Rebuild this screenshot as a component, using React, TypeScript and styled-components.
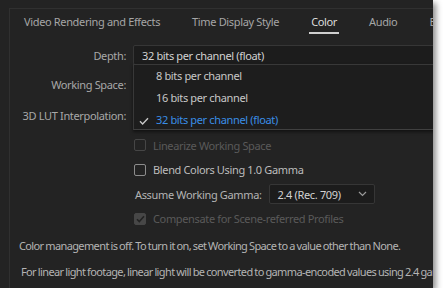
import React from 'react';
import styled, { createGlobalStyle } from 'styled-components';

const GlobalStyle = createGlobalStyle`
  html, body { margin: 0; padding: 0; background: #fff; }
  body { font-family: "Noto Sans", "Open Sans", sans-serif; }
`;

const Window = styled.div`
  width: 433px;
  height: 288px;
  background: #232323;
  box-shadow: 3px 3px 6px rgba(0, 0, 0, 0.45);
  overflow: hidden;
  padding: 8px 0 0 9px;
  box-sizing: border-box;
  font-size: 11px;
  letter-spacing: -0.35px;
  color: #b0b0b0;
`;

const Frame = styled.div`
  position: relative;
  width: 520px;
  height: 400px;
  border-top: 1px solid #303030;
  border-left: 1px solid #303030;
`;

const TabBar = styled.div`
  display: flex;
  gap: 32px;
  padding-left: 14px;
  height: 31px;
  white-space: nowrap;
`;

const Tab = styled.div<{ active?: boolean }>`
  position: relative;
  padding-top: 6px;
  line-height: 14px;
  color: ${({ active }) => (active ? '#dcdcdc' : '#a6a6a6')};
  &::after {
    content: '';
    display: ${({ active }) => (active ? 'block' : 'none')};
    position: absolute;
    left: -2px;
    right: -2px;
    top: 23px;
    height: 2px;
    background: #cfcfcf;
  }
`;

const Form = styled.div`
  display: flex;
  flex-direction: column;
`;

const Row = styled.div<{ h: number; top?: number }>`
  display: flex;
  align-items: center;
  gap: 7px;
  height: ${({ h }) => h}px;
  margin-top: ${({ top }) => top ?? 0}px;
`;

const Label = styled.div`
  width: 116px;
  text-align: right;
  color: #a8a8a8;
  white-space: nowrap;
`;

const Select = styled.div<{ w?: number }>`
  display: flex;
  align-items: center;
  justify-content: space-between;
  box-sizing: border-box;
  height: 20px;
  width: ${({ w }) => (w ? `${w}px` : '320px')};
  padding: 0 7px 0 8px;
  background: #1c1c1c;
  border: 1px solid #363636;
  border-radius: 2px;
  color: #d2d2d2;
  white-space: nowrap;
`;

const Menu = styled.div`
  position: absolute;
  left: 123px;
  top: 55px;
  width: 320px;
  height: 66px;
  box-sizing: border-box;
  background: #1d1d1d;
  border: 1px solid #383838;
  border-bottom-color: #404040;
  box-shadow: 0 2px 3px rgba(0, 0, 0, 0.5);
`;

const MenuItem = styled.div<{ selected?: boolean }>`
  position: relative;
  height: 22px;
  line-height: 22px;
  padding-left: 22px;
  color: ${({ selected }) => (selected ? '#3a8ee6' : '#c8c8c8')};
  white-space: nowrap;
`;

const Check = styled.svg`
  position: absolute;
  left: 5px;
  top: 8px;
`;

const CheckRow = styled.div<{ h: number; disabled?: boolean; top?: number }>`
  display: flex;
  align-items: center;
  gap: 7px;
  height: ${({ h }) => h}px;
  margin-top: ${({ top }) => top ?? 0}px;
  padding-left: 124px;
  color: ${({ disabled }) => (disabled ? '#5a5a5a' : '#bdbdbd')};
  white-space: nowrap;
`;

const Box = styled.div<{ disabled?: boolean; checked?: boolean }>`
  width: 12px;
  height: 12px;
  box-sizing: border-box;
  border-radius: 2px;
  border: 1.5px solid ${({ disabled }) => (disabled ? '#464646' : '#8c8c8c')};
  background: ${({ checked, disabled }) => (checked ? (disabled ? '#474747' : '#8c8c8c') : 'transparent')};
  display: flex;
  align-items: center;
  justify-content: center;
`;

const GammaRow = styled.div`
  display: flex;
  align-items: center;
  gap: 7px;
  height: 24px;
  padding-left: 125px;
  color: #b4b4b4;
  white-space: nowrap;
`;

const Note = styled.div<{ indent: number; top: number }>`
  padding-left: ${({ indent }) => indent}px;
  margin-top: ${({ top }) => top}px;
  line-height: 14px;
  letter-spacing: -0.62px;
  word-spacing: -0.5px;
  color: #b4b4b4;
  white-space: nowrap;
`;

const Chevron = () => (
  <svg width="9" height="6" viewBox="0 0 9 6">
    <path d="M1 1l3.5 3.5L8 1" fill="none" stroke="#9a9a9a" strokeWidth="1.2" />
  </svg>
);

const App: React.FC = () => {
  return (
    <>
      <GlobalStyle />
      <Window>
        <Frame>
          <TabBar>
            <Tab>Video Rendering and Effects</Tab>
            <Tab>Time Display Style</Tab>
            <Tab active>Color</Tab>
            <Tab>Audio</Tab>
            <Tab>Export</Tab>
          </TabBar>
          <Form>
            <Row h={20} top={5}>
              <Label>Depth:</Label>
              <Select>32 bits per channel (float)</Select>
            </Row>
            <Row h={20} top={9}>
              <Label>Working Space:</Label>
              <Select />
            </Row>
            <Row h={20} top={11}>
              <Label>3D LUT Interpolation:</Label>
              <Select />
            </Row>
            <CheckRow h={24} disabled top={8}>
              <Box disabled />
              Linearize Working Space
            </CheckRow>
            <CheckRow h={25}>
              <Box />
              Blend Colors Using 1.0 Gamma
            </CheckRow>
            <GammaRow>
              Assume Working Gamma:
              <Select w={106}>
                2.4 (Rec. 709)
                <Chevron />
              </Select>
            </GammaRow>
            <CheckRow h={25} disabled>
              <Box disabled checked>
                <svg width="9" height="8" viewBox="0 0 9 8">
                  <path d="M1 4.2l2.3 2.3L8 1.2" fill="none" stroke="#232323" strokeWidth="1.6" />
                </svg>
              </Box>
              Compensate for Scene-referred Profiles
            </CheckRow>
            <Note indent={9} top={8}>
              Color management is off. To turn it on, set Working Space to a value other than None.
            </Note>
            <Note indent={11} top={12}>
              For linear light footage, linear light will be converted to gamma-encoded values using 2.4 gamma.
            </Note>
          </Form>
          <Menu>
            <MenuItem>8 bits per channel</MenuItem>
            <MenuItem>16 bits per channel</MenuItem>
            <MenuItem selected>
              <Check width="10" height="8" viewBox="0 0 10 8">
                <path d="M1 4.3l2.6 2.6L9 1.2" fill="none" stroke="#c8c8c8" strokeWidth="1.4" />
              </Check>
              32 bits per channel (float)
            </MenuItem>
          </Menu>
        </Frame>
      </Window>
    </>
  );
};

export default App;
